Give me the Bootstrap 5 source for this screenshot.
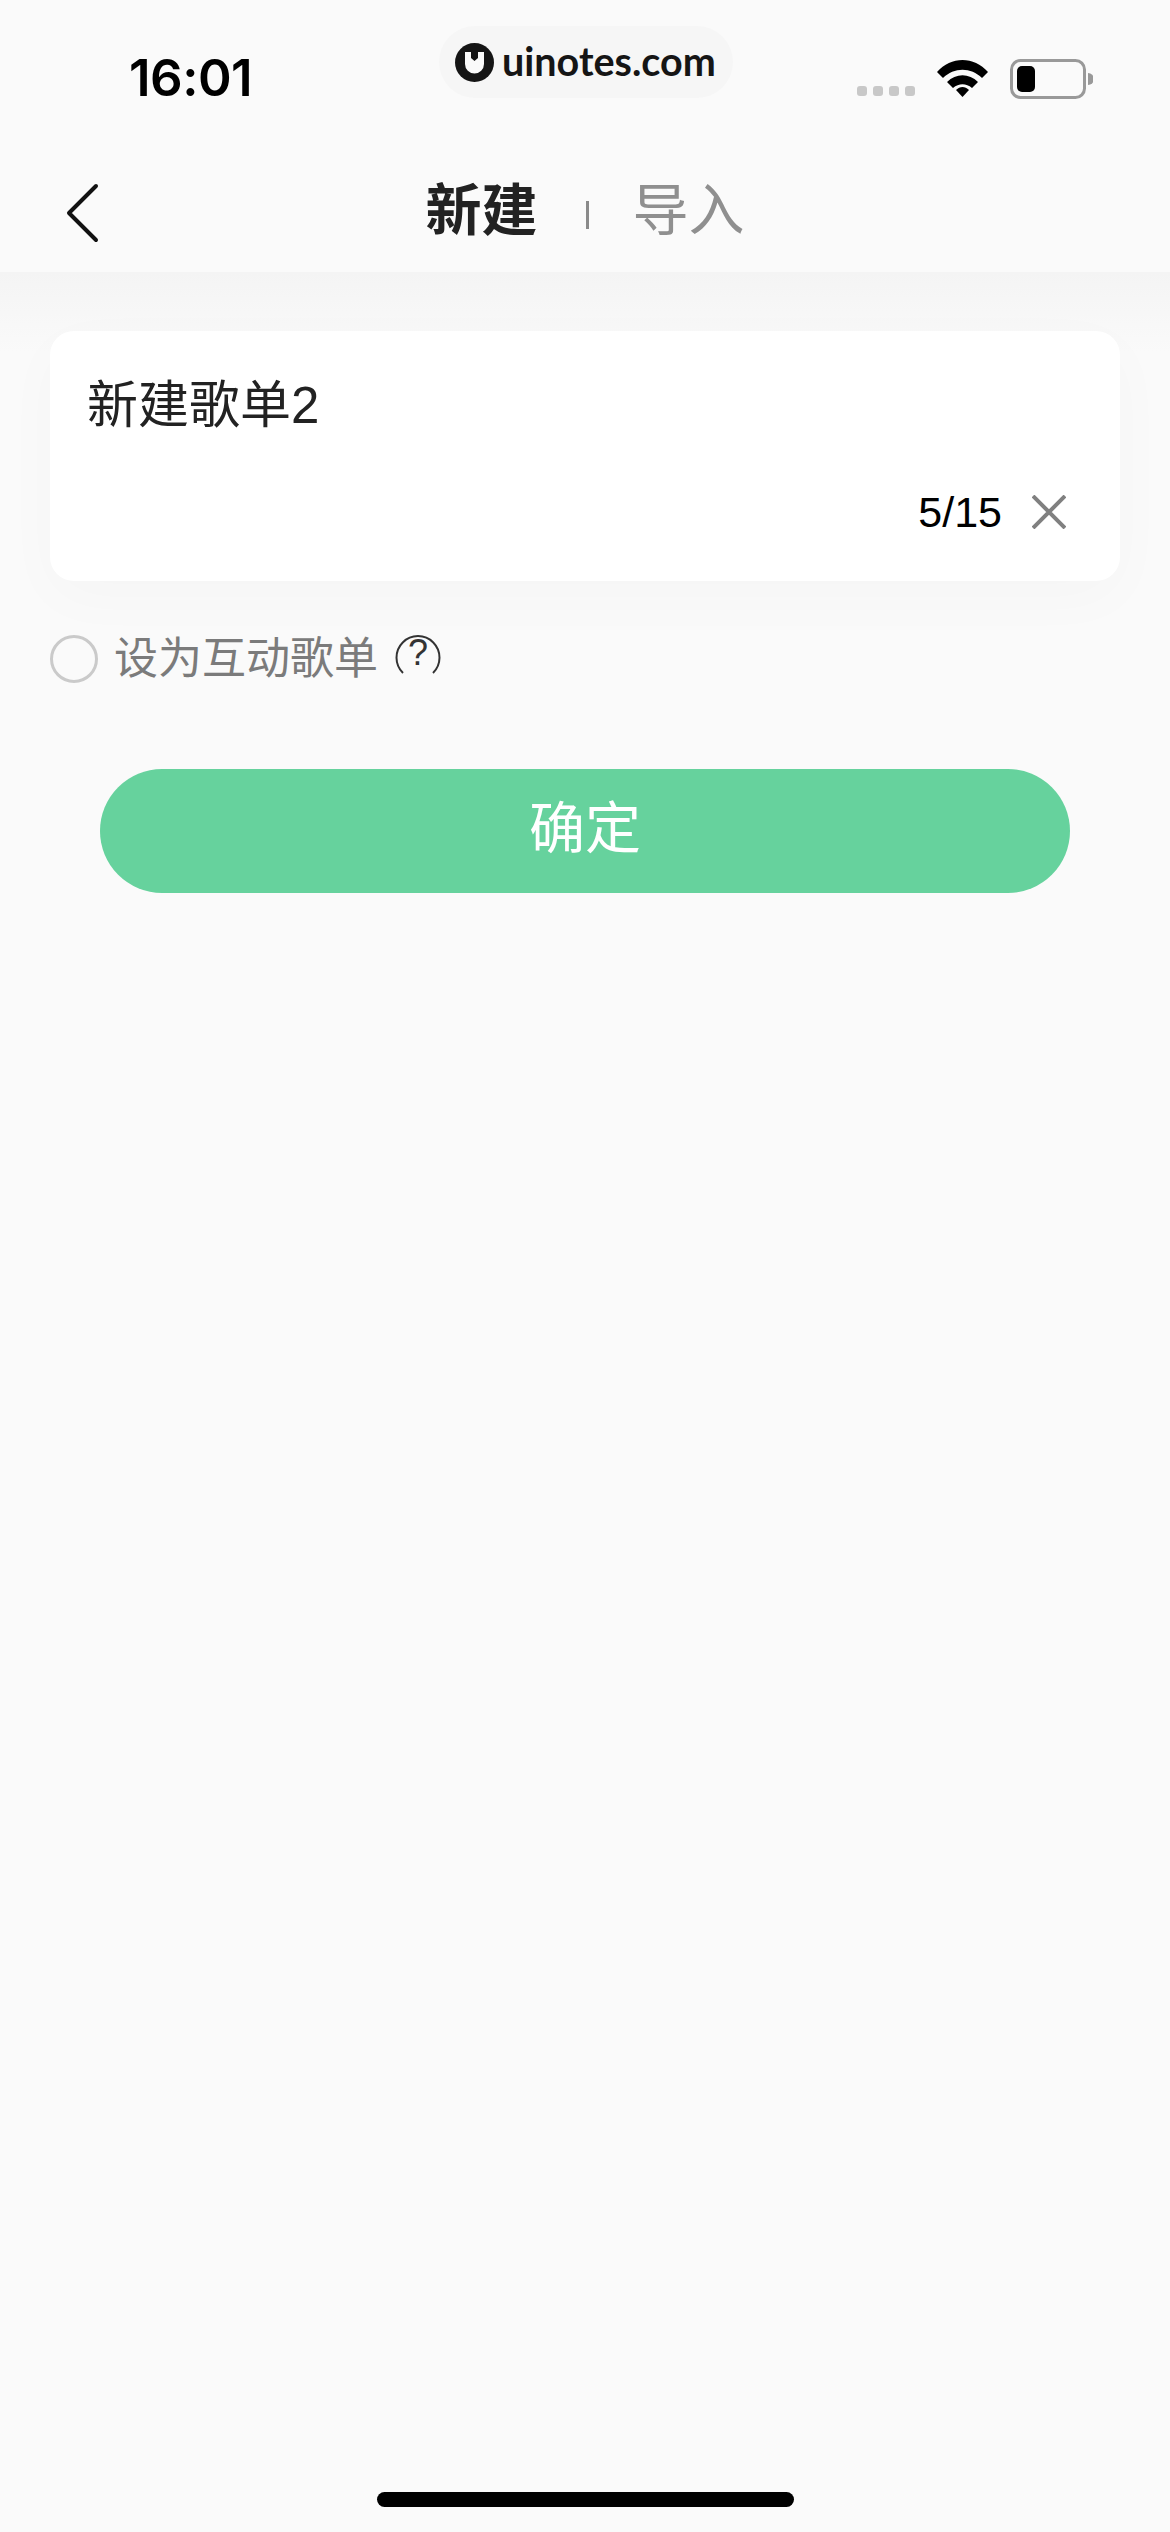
<!DOCTYPE html>
<html lang="zh-CN">

<head>
  <meta charset="UTF-8" />
  <meta name="viewport" content="width=device-width, initial-scale=1.0" />
  <title>新建歌单</title>
  <link href="https://cdn.jsdelivr.net/npm/bootstrap@5.3.5/dist/css/bootstrap.min.css" rel="stylesheet">
  <style>
    body {
      background: #fafafa;
      font-family: "Liberation Sans", "Noto Sans CJK SC", sans-serif;
      color: #222;
    }

    .app-screen {
      height: 2532px;
    }

    /* Status bar */
    .status-row {
      height: 112px;
      padding: 26px 77px 0 129px;
    }

    .status-time {
      width: 200px;
      padding-top: 22px;
      font-family: Inter, sans-serif;
      font-size: 51px;
      font-weight: 600;
      letter-spacing: -.5px;
      line-height: 60px;
      color: #000;
    }

    .brand-pill {
      width: 294px;
      height: 72px;
      margin-left: 110px;
      padding-left: 16px;
      background: #f6f6f6;
      border-radius: 36px;
      gap: 8px;
    }

    .brand-text {
      font-family: Lato, sans-serif;
      font-size: 39.5px;
      font-weight: 700;
      color: #151515;
      line-height: 1;
      margin-top: -3px;
    }

    .status-icons {
      margin-left: auto;
      padding-top: 33px;
    }

    .signal-box {
      gap: 6px;
      margin-right: 22px;
    }

    .signal-dot {
      width: 10px;
      height: 10px;
      margin-top: 27px;
      background: #c8c8c8;
      border-radius: 3px;
    }

    .wifi-icon {
      margin-right: 22px;
    }

    /* Title bar */
    .title-row {
      height: 160px;
      padding-top: 38px;
    }

    .back-btn {
      left: 65px;
      top: 71px;
    }

    .title-tab {
      font-size: 56px;
      line-height: 64px;
    }

    .title-active {
      font-weight: 700;
      color: #222;
    }

    .title-muted {
      color: #8f8f8f;
    }

    .title-sep {
      width: 3px;
      height: 28px;
      margin: 8px 44px 0 48px;
      background: #8a8a8a;
    }

    .title-shade {
      height: 80px;
      margin-bottom: -80px;
      background: linear-gradient(#f4f4f4, #fafafa);
    }

    /* Name card */
    .page-body {
      padding: 59px 50px 0;
      position: relative;
    }

    .name-box {
      height: 250px;
      padding: 45px 54px 0 37px;
      border: 0;
      border-radius: 24px;
      box-shadow: 0 16px 60px rgba(0, 0, 0, .025);
    }

    .name-text {
      font-size: 51px;
      line-height: 60px;
      color: #222;
    }

    .count-row {
      margin-top: 51px;
      gap: 30px;
    }

    .count-text {
      font-size: 43px;
      line-height: 50px;
      color: #000;
    }

    /* Interactive toggle */
    .toggle-row {
      margin-top: 52px;
      height: 52px;
    }

    .toggle-ring {
      width: 48px;
      height: 48px;
      margin-right: 16px;
      border: 3px solid #cacaca;
      border-radius: 50%;
    }

    .toggle-label {
      font-size: 44px;
      line-height: 52px;
      color: #7b7b7b;
    }

    .help-icon {
      margin: -12px 0 0 17px;
    }

    /* Confirm button */
    .confirm-btn {
      display: block;
      width: 970px;
      height: 124px;
      margin: 84px 0 0 100px;
      padding: 0 0 4px;
      background: #66d29d;
      border: 0;
      font-size: 56px;
      color: #fff;
    }

    .home-bar {
      width: 417px;
      height: 15px;
      margin-bottom: 25px;
      background: #000;
      border-radius: 8px;
    }
  </style>
</head>

<body>
  <div class="app-screen d-flex flex-column">

    <!-- Status bar -->
    <div class="status-row d-flex align-items-start">
      <div class="status-time">16:01</div>
      <div class="brand-pill d-flex align-items-center">
        <svg width="39" height="39" viewBox="0 0 39 39">
          <circle cx="19.5" cy="19.5" r="19.5" fill="#151515" />
          <path d="M10 9h6v6l3.500 3 3.500-3V9h6v12a9 9 0 0 1-19 0z" fill="#fafafa" />
          <path d="M17 9h5v5l-2.500 2-2.500-2z" fill="#151515" />
        </svg>
        <span class="brand-text">uinotes.com</span>
      </div>
      <div class="status-icons d-flex">
        <div class="signal-box d-flex">
          <span class="signal-dot"></span>
          <span class="signal-dot"></span>
          <span class="signal-dot"></span>
          <span class="signal-dot"></span>
        </div>
        <svg class="wifi-icon" width="51" height="38" viewBox="0 0 51 38">
          <path d="M0 13 C14 -3 37 -3 51 13 L45 19 C34 8 17 8 6 19z" fill="#000" />
          <path d="M10 23 C19 14 32 14 41 23 L35 29 C29 24 22 24 16 29z" fill="#000" />
          <path d="M19 31 C23 27 28 27 32 31 L25.500 38z" fill="#000" />
        </svg>
        <svg width="83" height="40" viewBox="0 0 83 40">
          <rect x="1.500" y="1.500" width="73" height="37" rx="9" fill="none" stroke="#999" stroke-width="3" />
          <rect x="7" y="7" width="18" height="26" rx="5" fill="#000" />
          <path d="M78 14a6 6 0 0 1 0 12z" fill="#999" />
        </svg>
      </div>
    </div>

    <!-- Title bar -->
    <div class="title-row position-relative d-flex justify-content-center align-items-center">
      <a class="back-btn position-absolute" href="#" aria-label="返回">
        <svg width="34" height="60" viewBox="0 0 34 60">
          <path d="M31 3 L4 30 L31 57" fill="none" stroke="#111" stroke-width="4" stroke-linecap="round" stroke-linejoin="round" />
        </svg>
      </a>
      <span class="title-tab title-active">新建</span>
      <span class="title-sep"></span>
      <span class="title-tab title-muted">导入</span>
    </div>
    <div class="title-shade"></div>

    <div class="page-body">
      <div class="card name-box">
        <div class="name-text">新建歌单2</div>
        <div class="count-row d-flex justify-content-end align-items-center">
          <span class="count-text">5/15</span>
          <svg width="34" height="34" viewBox="0 0 34 34">
            <path d="M1 1 L33 33 M33 1 L1 33" stroke="#808080" stroke-width="4" />
          </svg>
        </div>
      </div>

      <div class="toggle-row d-flex align-items-center">
        <span class="toggle-ring"></span>
        <span class="toggle-label">设为互动歌单</span>
        <svg class="help-icon" width="46" height="42" viewBox="0 0 46 42">
          <path d="M8 41 A21.500 21.500 0 1 1 38 41" fill="none" stroke="#333" stroke-width="2" />
          <text x="23" y="33" text-anchor="middle" font-size="36" font-family="Liberation Sans" fill="#333">?</text>
        </svg>
      </div>
    </div>

    <button class="confirm-btn btn rounded-pill" type="button">确定</button>

    <div class="home-bar mx-auto mt-auto"></div>
  </div>

  <script src="https://cdn.jsdelivr.net/npm/bootstrap@5.3.5/dist/js/bootstrap.bundle.min.js"></script>
</body>

</html>
